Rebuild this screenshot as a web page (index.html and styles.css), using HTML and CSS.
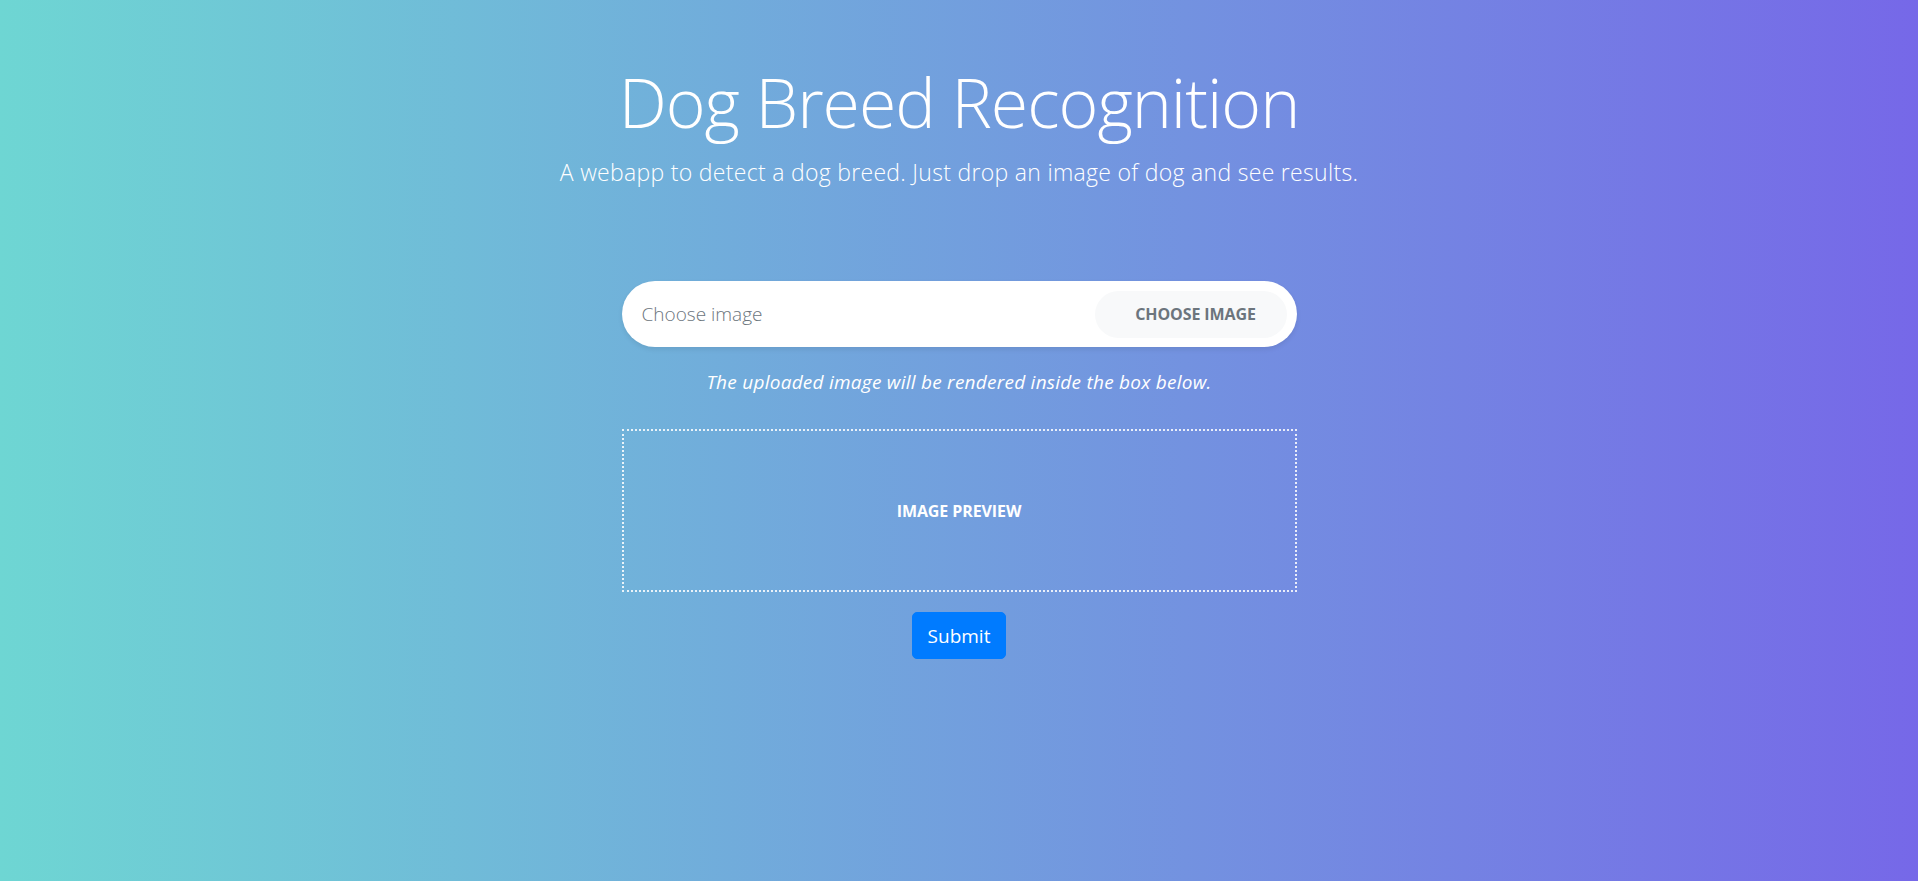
FILE: index.html
```html
<!DOCTYPE html>
<html lang="en">
<head>
<meta charset="utf-8">
<title>Dog Breed Recognition</title>
<link rel="stylesheet" href="styles.css">
</head>
<body>
  <main class="page">
    <header class="header">
      <h1 class="title">Dog Breed Recognition</h1>
      <p class="lead">A webapp to detect a dog breed. Just drop an image of dog and see results.</p>
    </header>
    <section class="upload">
      <div class="pill">
        <span class="pill-label">Choose image</span>
        <span class="pill-btn">Choose image</span>
      </div>
      <p class="hint">The uploaded image will be rendered inside the box below.</p>
      <div class="preview"><span class="preview-label">Image preview</span></div>
      <div class="actions"><button class="submit" type="button">Submit</button></div>
    </section>
  </main>
</body>
</html>
```
FILE: styles.css
```css
html, body {
  margin: 0;
  padding: 0;
}
body {
  min-height: 881px;
  background: linear-gradient(to right, #6ed6d3 0%, #7668e8 100%);
  font-family: "Open Sans", "Liberation Sans", sans-serif;
  color: #fff;
}
.page {
  display: flex;
  flex-direction: column;
  align-items: center;
  padding-top: 60px;
}
.header {
  text-align: center;
}
.title {
  margin: 0 0 10px;
  font-size: 68px;
  font-weight: 300;
  line-height: 84px;
  letter-spacing: -1px;
}
.lead {
  margin: 0;
  font-size: 23px;
  font-weight: 300;
  line-height: 37px;
  letter-spacing: 0.3px;
}
.upload {
  width: 675px;
  display: flex;
  flex-direction: column;
  margin-top: 90px;
}
.pill {
  display: flex;
  align-items: center;
  justify-content: space-between;
  height: 66px;
  box-sizing: border-box;
  padding: 10px;
  background: #fff;
  border-radius: 40px;
  box-shadow: 0 2.5px 5px rgba(0, 0, 0, 0.08);
}
.pill-label {
  padding-left: 10px;
  font-size: 19px;
  font-weight: 300;
  color: #6c757d;
}
.pill-btn {
  display: flex;
  align-items: center;
  justify-content: center;
  width: 192px;
  height: 47px;
  box-sizing: border-box;
  padding-left: 10px;
  background: #f8f9fa;
  border-radius: 30px;
  font-size: 16px;
  font-weight: 700;
  text-transform: uppercase;
  color: #6c757d;
  letter-spacing: -0.1px;
}
.hint {
  margin: 20px 0 0;
  text-align: center;
  font-style: italic;
  font-size: 19px;
  line-height: 30px;
  letter-spacing: 0.25px;
}
.preview {
  margin-top: 32px;
  height: 163px;
  box-sizing: border-box;
  border: 2px dotted rgba(255, 255, 255, 0.85);
  display: flex;
  align-items: center;
  justify-content: center;
}
.preview-label {
  font-size: 16px;
  font-weight: 700;
  text-transform: uppercase;
  letter-spacing: -0.1px;
}
.actions {
  display: flex;
  justify-content: center;
  margin-top: 20px;
}
.submit {
  width: 94px;
  height: 47px;
  border: 1px solid #007bff;
  background: #007bff;
  color: #fff;
  border-radius: 5px;
  font-family: "Open Sans", "Liberation Sans", sans-serif;
  font-size: 19px;
  line-height: 30px;
  padding: 0;
}
```
